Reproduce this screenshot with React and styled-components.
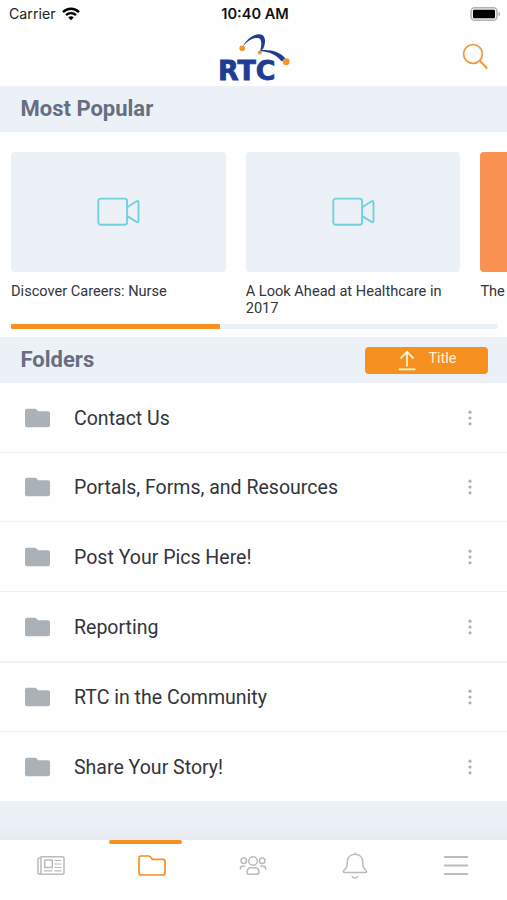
import React from 'react';
import styled, { createGlobalStyle } from 'styled-components';

const colors = {
  orange: '#f6901e',
  coral: '#f99150',
  band: '#ecf1f7',
  line: '#eff1f4',
  heading: '#666e80',
  text: '#32353b',
  folder: '#abb2b7',
  icon: '#b9bbbd',
  teal: '#74d0dc',
  navy: '#1f3c93'
};

const GlobalStyle = createGlobalStyle`
  * {
    box-sizing: border-box;
  }
  body {
    margin: 0;
    background: #fefefe;
    font-family: Roboto, 'Liberation Sans', sans-serif;
    color: ${colors.text};
  }
`;

const Screen = styled.div`
  display: flex;
  flex-direction: column;
  width: 507px;
  height: 900px;
  overflow: hidden;
`;

const StatusBar = styled.div`
  display: grid;
  grid-template-columns: 1fr auto 1fr;
  align-items: center;
  height: 28px;
  padding: 0 6px 1px 9px;
  font-family: Inter, sans-serif;
  font-size: 14.2px;
  color: #222;
`;
const Carrier = styled.div`
  display: flex;
  align-items: center;
  gap: 6px;
`;
const Clock = styled.div`
  font-size: 14.6px;
  font-weight: 600;
  color: #111;
`;
const Battery = styled.svg`
  justify-self: end;
`;

const Header = styled.header`
  display: grid;
  grid-template-columns: 1fr auto 1fr;
  height: 58px;
  padding: 0 18px;
`;
const SearchButton = styled.button`
  grid-column: 3;
  justify-self: end;
  align-self: center;
  display: flex;
  padding: 0 0 2px;
  border: 0;
  background: none;
`;
const Logo = styled.svg`
  grid-column: 2;
  overflow: visible;
`;

const SectionBar = styled.div`
  display: flex;
  align-items: center;
  justify-content: space-between;
  height: 46px;
  padding: 0 19px 0 20.5px;
  background: ${colors.band};
`;
const SectionTitle = styled.h2`
  margin: 0;
  font-size: 22px;
  font-weight: 700;
  line-height: 26px;
  color: ${colors.heading};
`;
const SortButton = styled.button`
  display: flex;
  justify-content: center;
  gap: 12px;
  width: 123px;
  height: 27px;
  padding: 3px 0 0 2px;
  border: 0;
  border-radius: 4px;
  background: ${colors.orange};
  font-family: inherit;
  font-size: 14.5px;
  line-height: 18px;
  color: #fff3dc;
`;

const Popular = styled.section`
  height: 205px;
  padding: 19.5px 0 0 11px;
  overflow: hidden;
`;
const Cards = styled.div`
  display: flex;
  gap: 20px;
  height: 172.9px;
`;
const Card = styled.div`
  flex: 0 0 214.7px;
`;
const Thumb = styled.div`
  display: flex;
  align-items: center;
  justify-content: center;
  height: 120.5px;
  border-radius: 4px;
  background: ${props => (props.$filled ? colors.coral : colors.band)};
`;
const CardTitle = styled.p`
  margin: 10.5px 0 0;
  font-size: 14.6px;
  line-height: 17.5px;
`;
const Track = styled.div`
  width: 487px;
  height: 5px;
  border-radius: 2px;
  background: ${colors.band};
`;
const Progress = styled.div`
  width: 209px;
  height: 5px;
  border-radius: 1px;
  background: ${colors.orange};
`;

const FolderList = styled.ul`
  margin: 0;
  padding: 0;
  list-style: none;
`;
const FolderRow = styled.li`
  display: flex;
  align-items: center;
  height: ${props => (props.$thick ? 71 : 69.5)}px;
  padding: 1px 34px 0 25px;
  border-bottom: ${props => (props.$thick ? 2 : 1)}px solid ${colors.line};
`;
const FolderName = styled.span`
  flex: 1;
  margin-left: 24px;
  padding-top: 2px;
  font-size: 19.55px;
  line-height: 24px;
`;

const Spacer = styled.div`
  flex: 1;
  background: linear-gradient(#ecf1f7 50%, #e7ebf1);
`;
const TabBar = styled.nav`
  display: grid;
  grid-template-columns: repeat(5, 1fr);
  height: 60px;
`;
const Tab = styled.button`
  display: flex;
  flex-direction: column;
  align-items: center;
  padding: 0;
  border: 0;
  background: none;
  color: ${props => (props.$active ? colors.orange : colors.icon)};
  &:before {
    content: '';
    width: 73px;
    height: 4px;
    margin: 0 14px 6px 0;
    border-radius: 2px;
    background: ${props => (props.$active ? colors.orange : 'transparent')};
  }
`;

const WifiIcon = () => (
  <svg width="18" height="14" viewBox="0 0 18 14" fill="none" stroke="#000" strokeWidth="2.3">
    <path d="M1 5.1C5.4.6 12.6.6 17 5.1" />
    <path d="M4 8.2c2.8-2.7 7.2-2.7 10 0" />
    <path d="M6.3 10.4c1.5-1.4 3.9-1.4 5.4 0L9 13.2z" fill="#000" stroke="none" />
  </svg>
);

const BatteryIcon = () => (
  <Battery width="31" height="14" viewBox="0 0 31 14">
    <rect x="1" y="0.8" width="26" height="12.4" rx="3.6" fill="#eee" stroke="#b5b5b5" strokeWidth="1.6" />
    <rect x="3" y="2.7" width="22" height="8.6" rx="1.4" fill="#000" />
    <path d="M28.6 4.8c2 .8 2 3.6 0 4.4z" fill="#a5a5a5" />
  </Battery>
);

const RtcLogo = () => (
  <Logo width="74" height="58" viewBox="0 0 74 58">
    <path
      d="M25.500 19C29 12 35 6.300 42 6.300c6.500-.2 7.500 7 4.200 14.500l-3.200 3.200c1.500-6 2.500-13.500-2-14C35.500 9.500 30 13 25.500 19z"
      fill={colors.navy}
    />
    <path d="M43.500 22.300c10-1 20 1.200 25.500 9.200l-4.500 1.800c-5-6-11-9.500-21-10z" fill={colors.navy} />
    <circle cx="25.200" cy="20.300" r="2.800" fill="#f6932b" />
    <circle cx="42.800" cy="24.500" r="2" fill="#f6932b" />
    <circle cx="69.200" cy="33.700" r="3.400" fill="#f6932b" />
    <text
      x="1"
      y="51.8"
      textLength="57.5"
      lengthAdjust="spacingAndGlyphs"
      fontFamily="DejaVu Sans"
      fontWeight="700"
      fontSize="26"
      fill={colors.navy}
      stroke={colors.navy}
      strokeWidth="0.8"
    >
      RTC
    </text>
  </Logo>
);

const SearchIcon = () => (
  <svg width="27" height="27" viewBox="0 0 27 27" fill="none" stroke="#f19a43" strokeWidth="1.8">
    <circle cx="11" cy="11" r="9.4" />
    <path d="M17.800 17.800l7.400 7.600" strokeWidth="2.100" />
  </svg>
);

const VideoIcon = () => (
  <svg width="43" height="29" viewBox="0 0 43 29" fill="none" stroke={colors.teal} strokeWidth="1.9" strokeLinejoin="round">
    <rect x="1.300" y="1.600" width="28.800" height="26.200" rx="2.500" />
    <path d="M30.300 10.200L39.500 4.300q2-1 2 1v18.600q0 2-2 1L30.300 19.100" />
  </svg>
);

const SortIcon = () => (
  <svg width="18" height="21" viewBox="0 0 18 21" fill="none" stroke="#fff3dc" strokeWidth="1.700">
    <path d="M9 16.500V2M2.500 8.300L9 1.800l6.500 6.500M.5 19.300h17" />
  </svg>
);

const FolderIcon = () => (
  <svg width="25" height="20" viewBox="0 0 25 20" fill={colors.folder}>
    <path d="M2 .7h7.800c.8 0 1.200.3 1.700.8l1.800 1.800h9.700a2 2 0 0 1 2 2v11.900a2 2 0 0 1-2 2H2a2 2 0 0 1-2-2V2.700a2 2 0 0 1 2-2z" />
  </svg>
);

const MoreIcon = () => (
  <svg width="6" height="18" viewBox="0 0 6 18" fill="#afb1b4">
    <circle cx="3" cy="3.200" r="1.600" />
    <circle cx="3" cy="9" r="1.600" />
    <circle cx="3" cy="14.800" r="1.600" />
  </svg>
);

const TabIcon = ({ children }) => (
  <svg width="32" height="32" viewBox="0 0 32 32" fill="none" stroke="currentColor" strokeWidth="1.500" strokeLinejoin="round" strokeLinecap="round">
    {children}
  </svg>
);

const tabs = [
  {
    name: 'news',
    icon: (
      <>
        <path d="M6 6.700h21.500q1.500 0 1.500 1.500v14.500q0 1.500-1.500 1.500H5q-2 0-2-2V9.500q0-1.500 1.500-1.500H6v13.500q0 2-1.200 2.500" />
        <rect x="9.700" y="10" width="7.600" height="7.500" />
        <path d="M20 10.500h6M20 14h6M20 17.500h6M9.500 20.800h7.500M20 20.800h6" strokeWidth="1.200" />
      </>
    )
  },
  {
    name: 'folders',
    active: true,
    icon: <path d="M5 6h7.500q1 0 1.700.8l2.300 2.600H27q2 0 2 2v11.600q0 2-2 2H5q-2 0-2-2V8q0-2 2-2z" strokeWidth="1.700" />
  },
  {
    name: 'people',
    icon: (
      <>
        <circle cx="16" cy="11" r="4.300" />
        <circle cx="6.800" cy="10.700" r="2.800" />
        <circle cx="25.200" cy="10.700" r="2.800" />
        <path d="M11.500 24.200q-1.500 0-1.500-1.500c0-4 2-5 4-5h4c2 0 4 1 4 5q0 1.500-1.500 1.500zM3.300 19c0-2.500 1.500-3.200 4.700-3M28.700 19c0-2.500-1.500-3.200-4.700-3" />
      </>
    )
  },
  {
    name: 'alerts',
    icon: (
      <>
        <path d="M16 3v1.300M16 4.300c-5 0-7.700 3.500-7.700 8 0 5-1 6-3.500 8.200-.8 1-.3 2 .7 2h21c1 0 1.500-1 .7-2-2.500-2.200-3.500-3.200-3.500-8.200 0-4.500-2.700-8-7.700-8z" />
        <path d="M13.300 26.500c1 2.100 4.400 2.100 5.400 0" />
      </>
    )
  },
  {
    name: 'menu',
    icon: <path d="M4.800 7h22.600M4.800 15.500h22.600M4.800 24h22.600" strokeWidth="1.800" />
  }
];

const videos = [
  { title: 'Discover Careers: Nurse' },
  { title: 'A Look Ahead at Healthcare in 2017' },
  { title: 'The', filled: true }
];

const folders = [
  'Contact Us',
  'Portals, Forms, and Resources',
  'Post Your Pics Here!',
  'Reporting',
  'RTC in the Community',
  'Share Your Story!'
];

const App = () => (
  <Screen>
    <GlobalStyle />
    <StatusBar>
      <Carrier>
        Carrier
        <WifiIcon />
      </Carrier>
      <Clock>10:40 AM</Clock>
      <BatteryIcon />
    </StatusBar>
    <Header>
      <RtcLogo />
      <SearchButton>
        <SearchIcon />
      </SearchButton>
    </Header>
    <SectionBar>
      <SectionTitle>Most Popular</SectionTitle>
    </SectionBar>
    <Popular>
      <Cards>
        {videos.map(({ title, filled }) => (
          <Card key={title}>
            <Thumb $filled={filled}>{!filled && <VideoIcon />}</Thumb>
            <CardTitle>{title}</CardTitle>
          </Card>
        ))}
      </Cards>
      <Track>
        <Progress />
      </Track>
    </Popular>
    <SectionBar>
      <SectionTitle>Folders</SectionTitle>
      <SortButton>
        <SortIcon />
        Title
      </SortButton>
    </SectionBar>
    <FolderList>
      {folders.map((name, i) => (
        <FolderRow key={name} $thick={i === 3}>
          <FolderIcon />
          <FolderName>{name}</FolderName>
          <MoreIcon />
        </FolderRow>
      ))}
    </FolderList>
    <Spacer />
    <TabBar>
      {tabs.map(({ name, active, icon }) => (
        <Tab key={name} $active={active}>
          <TabIcon>{icon}</TabIcon>
        </Tab>
      ))}
    </TabBar>
  </Screen>
);

export default App;
